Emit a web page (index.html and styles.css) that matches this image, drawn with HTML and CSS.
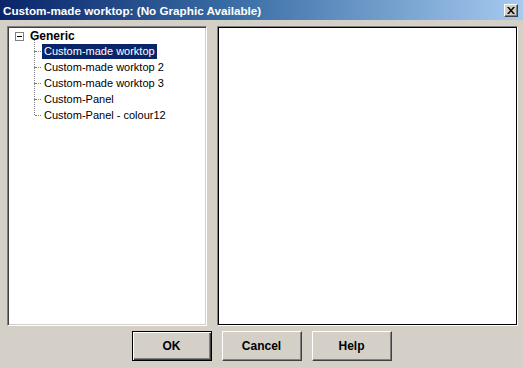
FILE: index.html
```html
<!DOCTYPE html>
<html>
<head>
<meta charset="utf-8">
<link rel="stylesheet" href="styles.css">
</head>
<body>
<div class="window">
  <div class="titlebar">
    <span class="title">Custom-made worktop: (No Graphic Available)</span>
    <span class="close"><svg width="8" height="7" viewBox="0 0 8 7"><path d="M0 0h2l2 2.5L6 0h2L5 3.5 8 7H6L4 4.5 2 7H0l3-3.5z" fill="#000"/></svg></span>
  </div>
  <div class="content">
    <div class="panels">
      <div class="tree sunken">
        <div class="root">
          <span class="expander"><svg width="9" height="9" viewBox="0 0 9 9"><rect x="0.5" y="0.5" width="8" height="8" fill="#fff" stroke="#808080"/><path d="M2 4.5h5" stroke="#000"/></svg></span>
          <span class="root-label">Generic</span>
        </div>
        <ul class="children">
          <li class="item"><span class="label selected">Custom-made worktop</span></li>
          <li class="item"><span class="label">Custom-made worktop 2</span></li>
          <li class="item"><span class="label">Custom-made worktop 3</span></li>
          <li class="item"><span class="label">Custom-Panel</span></li>
          <li class="item last"><span class="label">Custom-Panel - colour12</span></li>
        </ul>
      </div>
      <div class="preview sunken"></div>
    </div>
    <div class="buttons">
      <button class="btn default">OK</button>
      <button class="btn">Cancel</button>
      <button class="btn">Help</button>
    </div>
  </div>
</div>
</body>
</html>
```

FILE: styles.css
```css
html, body {
  margin: 0;
  padding: 0;
  background: #d4d0c8;
}
.window {
  width: 523px;
  height: 368px;
  box-sizing: border-box;
  background: #d4d0c8;
  font-family: "Liberation Sans", Arial, sans-serif;
  font-size: 11px;
  display: flex;
  flex-direction: column;
}
.titlebar {
  height: 20px;
  background: linear-gradient(to right, #0a246a 0%, #3a6ea5 45%, #a6caf0 100%);
  display: flex;
  align-items: center;
  justify-content: space-between;
  padding: 0 5px 0 3px;
}
.title {
  color: #fff;
  font-weight: bold;
  font-size: 11.7px;
}
.close {
  width: 14px;
  height: 13px;
  box-sizing: border-box;
  background: #d4d0c8;
  border: 1px solid;
  border-color: #fff #404040 #404040 #fff;
  box-shadow: inset -1px -1px 0 #808080;
  display: flex;
  align-items: center;
  justify-content: center;
}
.close svg { display: block; }
.content {
  flex: 1;
  padding: 6px 5px 0 7px;
  display: flex;
  flex-direction: column;
}
.panels {
  display: flex;
  gap: 10px;
  height: 300px;
}
.sunken {
  box-sizing: border-box;
  background: #fff;
  border: 1px solid;
  border-color: #808080 #fff #fff #808080;
  box-shadow: inset 1px 1px 0 #404040, inset -1px -1px 0 #d4d0c8;
}
.tree {
  width: 200px;
  padding: 1px 0 0 7px;
}
.preview {
  width: 302px;
  border-color: #808080 #fff #fff #808080;
  box-shadow: inset 1px 1px 0 #000, inset -1px -1px 0 #000;
}
.root {
  display: flex;
  align-items: center;
  height: 16px;
}
.expander {
  width: 9px;
  height: 9px;
  margin-right: 6px;
}
.expander svg { display: block; }
.root-label {
  font-weight: bold;
  font-size: 12px;
}
.children {
  list-style: none;
  margin: -1px 0 0 0;
  padding: 0 0 0 19px;
}
.item {
  position: relative;
  height: 16px;
  display: flex;
  align-items: center;
  padding-left: 8px;
}
.item::before {
  content: "";
  position: absolute;
  left: 0;
  top: -8px;
  height: 16px;
  border-left: 1px dotted #808080;
}
.item::after {
  content: "";
  position: absolute;
  left: 1px;
  top: 8px;
  width: 6px;
  border-top: 1px dotted #808080;
}
.label {
  padding: 1px 2px 1px 2px;
  line-height: 13px;
  color: #000;
}
.label.selected {
  background: #0a246a;
  color: #fff;
}
.buttons {
  display: flex;
  justify-content: center;
  gap: 10px;
  margin-top: 5px;
  padding-right: 2px;
}
.btn {
  width: 80px;
  height: 30px;
  box-sizing: border-box;
  background: #d4d0c8;
  font-family: "Liberation Sans", Arial, sans-serif;
  font-weight: bold;
  font-size: 12px;
  color: #000;
  border: 1px solid;
  border-color: #fff #404040 #404040 #fff;
  box-shadow: inset -1px -1px 0 #808080;
  padding: 0;
}
.btn.default {
  border: 1px solid #000;
  box-shadow: inset 1px 1px 0 #fff, inset -1px -1px 0 #404040, inset -2px -2px 0 #808080;
}
```
